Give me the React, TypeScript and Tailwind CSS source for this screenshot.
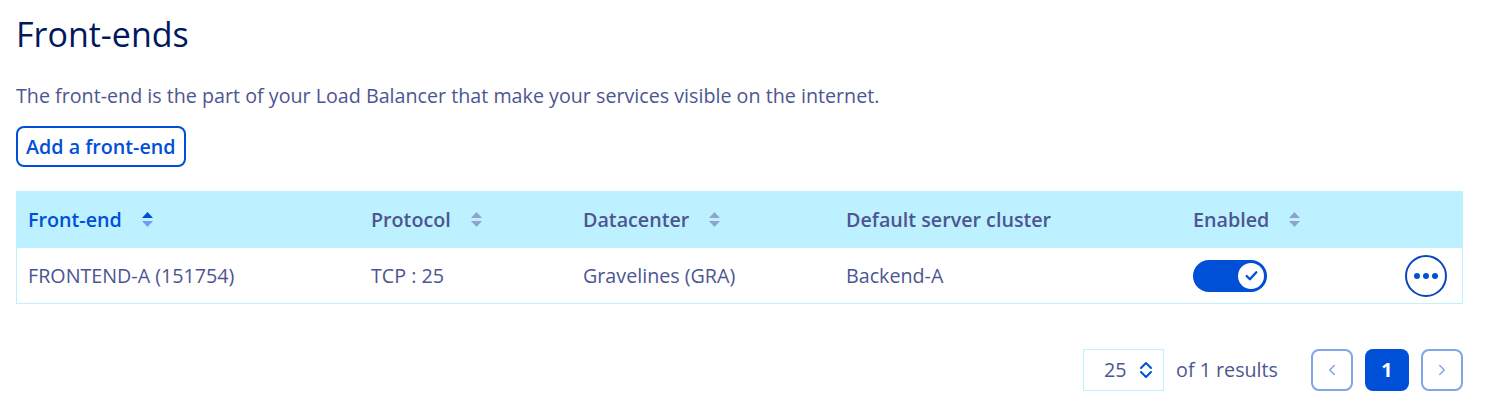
import { ChevronLeft, ChevronRight } from "lucide-react";

const COLUMNS = [
  { label: "Front-end", width: "w-[343px]", sortable: true, active: true },
  { label: "Protocol", width: "w-[212px]", sortable: true },
  { label: "Datacenter", width: "w-[263px]", sortable: true },
  { label: "Default server cluster", width: "w-[347px]", sortable: false },
  { label: "Enabled", width: "w-[200px]", sortable: true },
];

function SortIcon({ active }: { active?: boolean }) {
  return (
    <svg width="11" height="15" viewBox="0 0 11 15" className="ml-5">
      <path d="M5.5 0 L11 6 H0 Z" fill={active ? "#0050d7" : "#8fa3cf"} />
      <path d="M0 9 H11 L5.5 15 Z" fill={active ? "#6f9ef0" : "#8fa3cf"} />
    </svg>
  );
}

export default function App() {
  return (
    <div className="min-h-screen bg-white pl-4 pr-[23px] pt-[12px] font-['Open_Sans',sans-serif] text-[#4d5592]">
      <h1 className="text-[34px] leading-[44px] text-[#00185e]">Front-ends</h1>

      <p className="mt-[28px] text-[19.7px] leading-6">
        The front-end is the part of your Load Balancer that make your services visible on the internet.
      </p>

      <button className="mt-[18px] h-[41px] rounded-lg border-2 border-[#0050d7] px-[8px] text-[19.7px] font-semibold text-[#0050d7]">
        Add a front-end
      </button>

      <div className="mt-[24px] border-x border-b border-[#bef1ff]">
        <div className="flex h-[57px] items-center bg-[#bef1ff] pl-[11px]">
          {COLUMNS.map((c) => (
            <div key={c.label} className={`${c.width} flex items-center`}>
              <span className={`text-[19.7px] font-semibold ${c.active ? "text-[#0050d7]" : "text-[#4d5592]"}`}>
                {c.label}
              </span>
              {c.sortable && <SortIcon active={c.active} />}
            </div>
          ))}
        </div>
        <div className="flex h-[55px] items-center pl-[11px] pr-[15px] text-[19.7px]">
          <div className="w-[343px]">FRONTEND-A (151754)</div>
          <div className="w-[212px]">TCP : 25</div>
          <div className="w-[263px]">Gravelines (GRA)</div>
          <div className="w-[347px]">Backend-A</div>
          <div className="flex-1">
            <div className="flex h-[32px] w-[74px] items-center justify-end rounded-full bg-[#0050d7] pr-[3px]">
              <div className="flex h-[26px] w-[26px] items-center justify-center rounded-full bg-white">
                <svg width="15" height="15" viewBox="0 0 14 14">
                  <path d="M2.5 7.5 L5.5 10.5 L11.5 4" fill="none" stroke="#0050d7" strokeWidth="2.2" strokeLinecap="round" strokeLinejoin="round" />
                </svg>
              </div>
            </div>
          </div>
          <button className="flex h-[42px] w-[42px] items-center justify-center gap-[3px] rounded-full border-2 border-[#0a46b8]">
            <span className="h-[6px] w-[6px] rounded-full bg-[#0050d7]" />
            <span className="h-[6px] w-[6px] rounded-full bg-[#0050d7]" />
            <span className="h-[6px] w-[6px] rounded-full bg-[#0050d7]" />
          </button>
        </div>
      </div>

      <div className="mt-[45px] flex items-center justify-end">
        <div className="flex h-[42px] w-[81px] items-center justify-between border border-[#bef1ff] pl-[20px] pr-[10px] text-[19.7px]">
          <span>25</span>
          <svg width="14" height="18" viewBox="0 0 14 18">
            <path d="M2 7 L7 2 L12 7 M2 11 L7 16 L12 11" fill="none" stroke="#0050d7" strokeWidth="2" strokeLinecap="round" strokeLinejoin="round" />
          </svg>
        </div>
        <span className="ml-3 text-[19.7px]">of 1 results</span>
        <div className="ml-[33px] flex gap-3">
          <button className="flex h-[42px] w-[42px] items-center justify-center rounded-lg border-2 border-[#80a6ea] text-[#80a6ea]">
            <ChevronLeft size={18} />
          </button>
          <button className="flex h-[42px] w-[44px] items-center justify-center rounded-lg bg-[#0050d7] text-[19.7px] font-bold text-white">
            1
          </button>
          <button className="flex h-[42px] w-[42px] items-center justify-center rounded-lg border-2 border-[#80a6ea] text-[#80a6ea]">
            <ChevronRight size={18} />
          </button>
        </div>
      </div>
    </div>
  );
}
